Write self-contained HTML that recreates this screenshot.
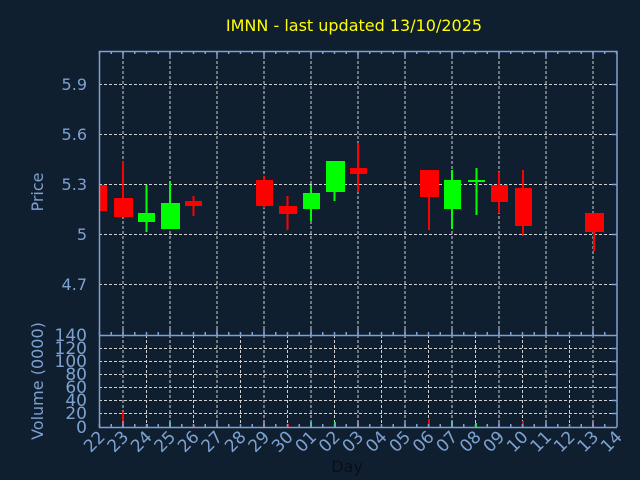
<!DOCTYPE html>
<html><head><meta charset="utf-8"><style>
html,body{margin:0;padding:0;background:#101f30;}
svg{display:block;font-family:"DejaVu Sans","Liberation Sans",sans-serif;}
</style></head><body>
<svg width="640" height="480" viewBox="0 0 640 480" xmlns="http://www.w3.org/2000/svg">
<rect width="640" height="480" fill="#101f30"/>
<text x="354" y="31" fill="#ffff00" font-size="16" text-anchor="middle">IMNN - last updated 13/10/2025</text>
<!-- grids -->
<g stroke="#d0d0d0" stroke-width="1" stroke-dasharray="3,2" fill="none">
<path d="M99 84.5H617M99 134.5H617M99 184.5H617M99 234.5H617M99 284.5H617"/>
<path d="M123 51V335M170 51V335M217 51V335M264 51V335M311 51V335M358 51V335M405 51V335M452 51V335M499 51V335M546 51V335M593 51V335"/>
<path d="M99 348.5H617M99 361.5H617M99 374.5H617M99 387.5H617M99 400.5H617M99 413.5H617"/>
<path d="M123 335V427M146.5 335V427M170 335V427M193.5 335V427M217 335V427M240.5 335V427M264 335V427M287.5 335V427M311 335V427M334.5 335V427M358 335V427M381.5 335V427M405 335V427M428.5 335V427M452 335V427M475.5 335V427M499 335V427M522.5 335V427M546 335V427M569.5 335V427M593 335V427"/>
</g>
<!-- candles -->
<g stroke-width="2">
<rect x="99" y="185" width="8" height="26" fill="#ff0000"/>
<line x1="123" y1="161" x2="123" y2="217" stroke="#ff0000"/><rect x="114" y="198" width="19" height="19" fill="#ff0000"/>
<line x1="146.5" y1="185" x2="146.5" y2="232" stroke="#00ff00"/><rect x="138" y="213" width="17" height="9" fill="#00ff00"/>
<line x1="170" y1="181" x2="170" y2="229" stroke="#00ff00"/><rect x="161" y="203" width="19" height="26" fill="#00ff00"/>
<line x1="193.5" y1="196" x2="193.5" y2="216" stroke="#ff0000"/><rect x="185" y="201" width="17" height="5" fill="#ff0000"/>
<line x1="264" y1="176" x2="264" y2="208" stroke="#ff0000"/><rect x="256" y="180" width="17" height="26" fill="#ff0000"/>
<line x1="287.5" y1="196" x2="287.5" y2="230" stroke="#ff0000"/><rect x="279" y="206" width="18" height="8" fill="#ff0000"/>
<line x1="311" y1="185" x2="311" y2="221" stroke="#00ff00"/><rect x="303" y="193" width="17" height="16" fill="#00ff00"/>
<line x1="334.5" y1="161" x2="334.5" y2="201" stroke="#00ff00"/><rect x="326" y="161" width="19" height="31" fill="#00ff00"/>
<line x1="358" y1="143" x2="358" y2="192" stroke="#ff0000"/><rect x="350" y="168" width="17" height="6" fill="#ff0000"/>
<line x1="429" y1="170" x2="429" y2="230" stroke="#ff0000"/><rect x="420" y="170" width="19" height="27" fill="#ff0000"/>
<line x1="452" y1="170" x2="452" y2="229" stroke="#00ff00"/><rect x="444" y="180" width="17" height="29" fill="#00ff00"/>
<line x1="476.5" y1="168" x2="476.5" y2="215" stroke="#00ff00"/><rect x="468" y="180" width="17" height="2" fill="#00ff00"/>
<line x1="499" y1="172" x2="499" y2="213" stroke="#ff0000"/><rect x="491" y="185" width="17" height="17" fill="#ff0000"/>
<line x1="523" y1="170" x2="523" y2="236" stroke="#ff0000"/><rect x="515" y="188" width="17" height="38" fill="#ff0000"/>
<line x1="594" y1="232" x2="594" y2="251" stroke="#ff0000"/><rect x="585" y="213" width="19" height="19" fill="#ff0000"/>
</g>
<!-- volume bars -->
<g>
<rect x="122" y="412" width="2" height="15" fill="#ff0000"/>
<rect x="146" y="424" width="2" height="3" fill="#00ff00"/>
<rect x="169" y="422" width="2" height="5" fill="#00ff00"/>
<rect x="193" y="425" width="2" height="2" fill="#ff0000"/>
<rect x="263" y="421" width="2" height="6" fill="#ff0000"/>
<rect x="287" y="424" width="2" height="3" fill="#ff0000"/>
<rect x="310" y="422" width="2" height="5" fill="#00ff00"/>
<rect x="334" y="422" width="2" height="5" fill="#00ff00"/>
<rect x="357" y="421" width="2" height="6" fill="#ff0000"/>
<rect x="428" y="419" width="2" height="8" fill="#ff0000"/>
<rect x="451" y="421" width="2" height="6" fill="#00ff00"/>
<rect x="475" y="423" width="2" height="4" fill="#00ff00"/>
<rect x="498" y="424" width="2" height="3" fill="#ff0000"/>
<rect x="522" y="421" width="2" height="6" fill="#ff0000"/>
<rect x="592" y="422" width="2" height="5" fill="#ff0000"/>
</g>
<!-- axes -->
<g stroke="#7da2d0" stroke-width="1.5" fill="none">
<path d="M99.5 51V427.5H617M99 51.5H617V427M99 335.5H617"/>
<path d="M99.5 51v3m11.75-3v3m11.75-3v3m11.75-3v3m11.75-3v3m11.75-3v3m11.75-3v3m11.75-3v3m11.75-3v3m11.75-3v3m11.75-3v3m11.75-3v3m11.75-3v3m11.75-3v3m11.75-3v3m11.75-3v3m11.75-3v3m11.75-3v3m11.75-3v3m11.75-3v3m11.75-3v3m11.75-3v3m11.75-3v3m11.75-3v3m11.75-3v3m11.75-3v3m11.75-3v3m11.75-3v3m11.75-3v3m11.75-3v3m11.75-3v3m11.75-3v3m11.75-3v3m11.75-3v3m11.75-3v3m11.75-3v3m11.75-3v3m11.75-3v3m11.75-3v3m11.75-3v3m11.75-3v3m11.75-3v3m11.75-3v3m11.75-3v3m11.75-3v3"/>
<path d="M123 51v6m47-6v6m47-6v6m47-6v6m47-6v6m47-6v6m47-6v6m47-6v6m47-6v6m47-6v6m47-6v6"/>
<path d="M99.5 335v-3m11.75 3v-3m11.75 3v-3m11.75 3v-3m11.75 3v-3m11.75 3v-3m11.75 3v-3m11.75 3v-3m11.75 3v-3m11.75 3v-3m11.75 3v-3m11.75 3v-3m11.75 3v-3m11.75 3v-3m11.75 3v-3m11.75 3v-3m11.75 3v-3m11.75 3v-3m11.75 3v-3m11.75 3v-3m11.75 3v-3m11.75 3v-3m11.75 3v-3m11.75 3v-3m11.75 3v-3m11.75 3v-3m11.75 3v-3m11.75 3v-3m11.75 3v-3m11.75 3v-3m11.75 3v-3m11.75 3v-3m11.75 3v-3m11.75 3v-3m11.75 3v-3m11.75 3v-3m11.75 3v-3m11.75 3v-3m11.75 3v-3m11.75 3v-3m11.75 3v-3m11.75 3v-3m11.75 3v-3m11.75 3v-3"/>
<path d="M123 335v-6m47 6v-6m47 6v-6m47 6v-6m47 6v-6m47 6v-6m47 6v-6m47 6v-6m47 6v-6m47 6v-6m47 6v-6"/>
<path d="M99.5 427v-3m11.75 3v-3m11.75 3v-3m11.75 3v-3m11.75 3v-3m11.75 3v-3m11.75 3v-3m11.75 3v-3m11.75 3v-3m11.75 3v-3m11.75 3v-3m11.75 3v-3m11.75 3v-3m11.75 3v-3m11.75 3v-3m11.75 3v-3m11.75 3v-3m11.75 3v-3m11.75 3v-3m11.75 3v-3m11.75 3v-3m11.75 3v-3m11.75 3v-3m11.75 3v-3m11.75 3v-3m11.75 3v-3m11.75 3v-3m11.75 3v-3m11.75 3v-3m11.75 3v-3m11.75 3v-3m11.75 3v-3m11.75 3v-3m11.75 3v-3m11.75 3v-3m11.75 3v-3m11.75 3v-3m11.75 3v-3m11.75 3v-3m11.75 3v-3m11.75 3v-3m11.75 3v-3m11.75 3v-3m11.75 3v-3"/>
<path d="M123 427v-6m47 6v-6m47 6v-6m47 6v-6m47 6v-6m47 6v-6m47 6v-6m47 6v-6m47 6v-6m47 6v-6m47 6v-6"/>
<path d="M617 84.5h-5M617 134.5h-5M617 184.5h-5M617 234.5h-5M617 284.5h-5M617 348.5h-5M617 361.5h-5M617 374.5h-5M617 387.5h-5M617 400.5h-5M617 413.5h-5"/>
</g>
<!-- y labels -->
<g fill="#7da2d0" font-size="16" text-anchor="end">
<text x="87" y="90">5.9</text><text x="87" y="140">5.6</text><text x="87" y="190">5.3</text><text x="87" y="240">5</text><text x="87" y="290">4.7</text>
</g>
<g fill="#7da2d0" font-size="17" text-anchor="end">
<text x="87" y="341">140</text><text x="87" y="354">120</text><text x="87" y="367">100</text><text x="87" y="380">80</text><text x="87" y="393">60</text><text x="87" y="406">40</text><text x="87" y="419">20</text><text x="87" y="433">0</text>
</g>
<text transform="translate(43,192) rotate(-90)" fill="#7da2d0" font-size="16" text-anchor="middle">Price</text>
<text transform="translate(43,381) rotate(-90)" fill="#7da2d0" font-size="16" text-anchor="middle">Volume (0000)</text>
<!-- x labels -->
<g fill="#7da2d0" font-size="17" text-anchor="end">
<text transform="translate(106,438) rotate(-45)">22</text>
<text transform="translate(129.5,438) rotate(-45)">23</text>
<text transform="translate(153,438) rotate(-45)">24</text>
<text transform="translate(176.5,438) rotate(-45)">25</text>
<text transform="translate(200,438) rotate(-45)">26</text>
<text transform="translate(223.5,438) rotate(-45)">27</text>
<text transform="translate(247,438) rotate(-45)">28</text>
<text transform="translate(270.5,438) rotate(-45)">29</text>
<text transform="translate(294,438) rotate(-45)">30</text>
<text transform="translate(317.5,438) rotate(-45)">01</text>
<text transform="translate(341,438) rotate(-45)">02</text>
<text transform="translate(364.5,438) rotate(-45)">03</text>
<text transform="translate(388,438) rotate(-45)">04</text>
<text transform="translate(411.5,438) rotate(-45)">05</text>
<text transform="translate(435,438) rotate(-45)">06</text>
<text transform="translate(458.5,438) rotate(-45)">07</text>
<text transform="translate(482,438) rotate(-45)">08</text>
<text transform="translate(505.5,438) rotate(-45)">09</text>
<text transform="translate(529,438) rotate(-45)">10</text>
<text transform="translate(552.5,438) rotate(-45)">11</text>
<text transform="translate(576,438) rotate(-45)">12</text>
<text transform="translate(599.5,438) rotate(-45)">13</text>
<text transform="translate(623,438) rotate(-45)">14</text>
</g>
<text x="347" y="472" fill="#0a0f16" font-size="16" text-anchor="middle">Day</text>
</svg>
</body></html>
